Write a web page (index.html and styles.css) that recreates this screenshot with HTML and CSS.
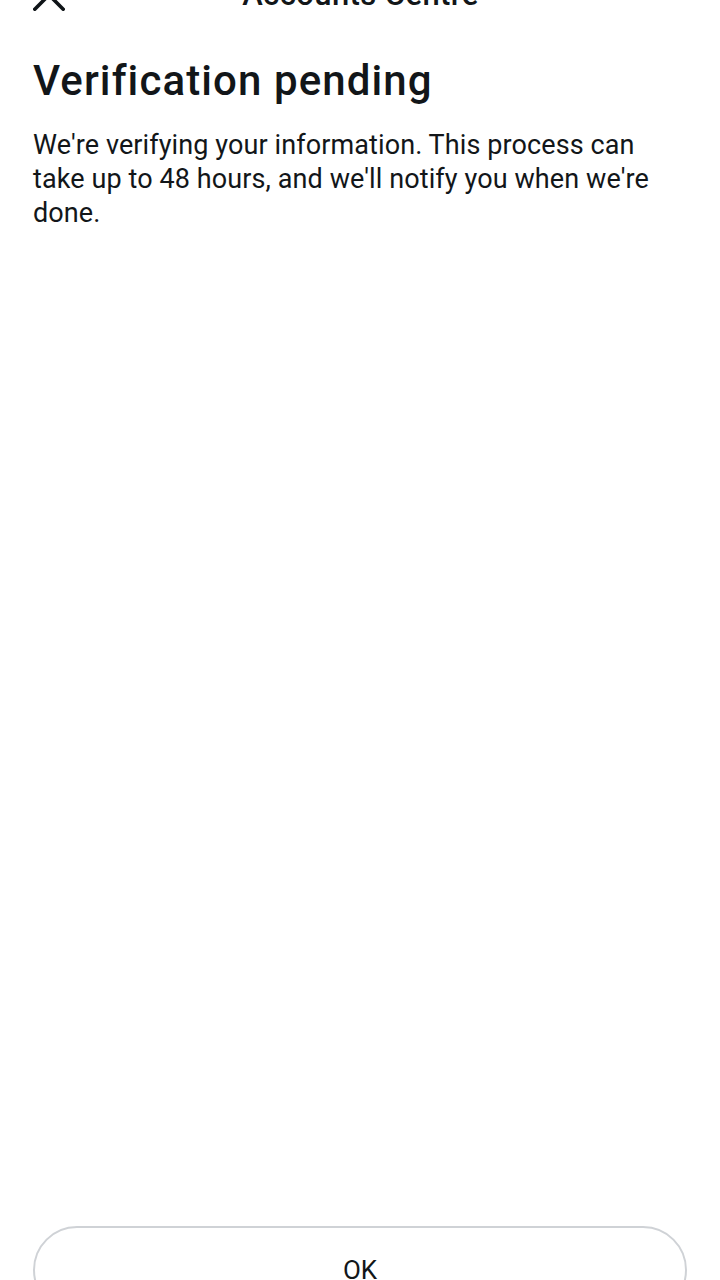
FILE: index.html
```html
<!DOCTYPE html>
<html lang="en">
<head>
<meta charset="utf-8">
<title>Verification pending</title>
<link rel="stylesheet" href="styles.css">
</head>
<body>
<div class="page">
  <header class="topbar">
    <button class="close" aria-label="Close">
      <svg width="32" height="32" viewBox="0 0 32 32"><path d="M1.8 1.8 L30.2 30.2 M30.2 1.8 L1.8 30.2" stroke="#0f1418" stroke-width="3.6" stroke-linecap="round" fill="none"/></svg>
    </button>
    <div class="topbar-title">Accounts Centre</div>
    <div class="spacer"></div>
  </header>
  <main class="content">
    <h1 class="title">Verification pending</h1>
    <p class="desc">We're verifying your information. This process can take up to 48 hours, and we'll notify you when we're done.</p>
  </main>
  <footer class="footer">
    <button class="ok">OK</button>
  </footer>
</div>
</body>
</html>
```
FILE: styles.css
```css
html, body {
  margin: 0;
  padding: 0;
  background: #ffffff;
}
body {
  width: 720px;
  height: 1280px;
  overflow: hidden;
  font-family: Roboto, "Liberation Sans", sans-serif;
  color: #121619;
}
.page {
  height: 1280px;
  display: flex;
  flex-direction: column;
}
.topbar {
  height: 60px;
  margin-top: -35px;
  display: flex;
  align-items: center;
  padding: 0 32px 0 33px;
}
.close {
  width: 32px;
  height: 32px;
  padding: 0;
  border: 0;
  background: none;
  display: flex;
}
.topbar-title {
  flex: 1;
  text-align: center;
  font-size: 31px;
  line-height: 36px;
  font-weight: 500;
  letter-spacing: 0.4px;
}
.spacer {
  width: 32px;
}
.content {
  flex: 1;
  padding: 0 33px;
}
.title {
  margin: 30px 0 0;
  font-size: 42px;
  font-weight: 500;
  line-height: 52px;
  letter-spacing: 1.1px;
}
.desc {
  margin: 21px 0 0;
  font-size: 27px;
  line-height: 34px;
  font-weight: 400;
  letter-spacing: 0.1px;
}
.footer {
  padding: 0 33px;
  margin-bottom: -34px;
}
.ok {
  width: 100%;
  height: 88px;
  border: 2px solid #cfd2d6;
  border-radius: 44px;
  background: #fff;
  font-family: Roboto, "Liberation Sans", sans-serif;
  font-size: 26px;
  color: #121619;
  padding: 0;
}
```
